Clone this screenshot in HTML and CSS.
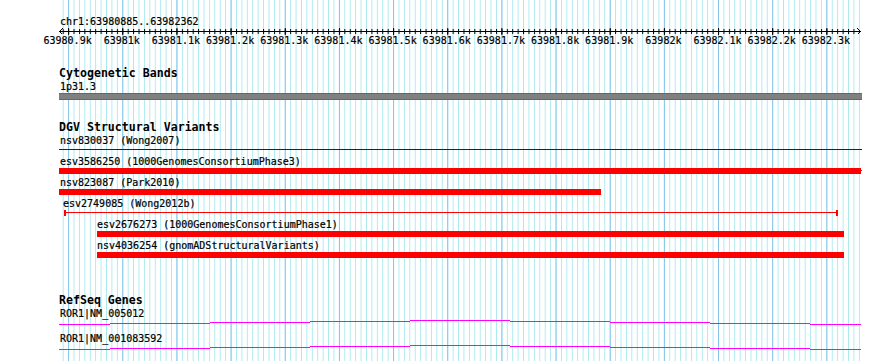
FILE: index.html
```html
<!DOCTYPE html>
<html lang="en">
<head>
    <meta charset="UTF-8">
    <title>Genome view chr1:63980885..63982362</title>
    <link rel="stylesheet" href="styles.css">
</head>
<body>

    <div class="browser">
        <div class="panel">

            <!-- Griglia di sfondo: una linea ogni 10bp, piu scura ogni 100bp -->
            <svg class="grid" width="803" height="361" shape-rendering="crispEdges">
                <defs>
                    <pattern id="minorLines" x="3.708" y="0" width="5.416" height="361" patternUnits="userSpaceOnUse">
                        <rect width="1" height="361" fill="#a9e9ef"/>
                    </pattern>
                    <pattern id="majorLines" x="9.124" y="0" width="54.16" height="361" patternUnits="userSpaceOnUse">
                        <rect width="1" height="361" fill="#86c5ea"/>
                    </pattern>
                </defs>
                <rect width="803" height="361" fill="url(#minorLines)"/>
                <rect width="803" height="361" fill="url(#majorLines)"/>
            </svg>

            <!-- Righello -->
            <div class="ruler">
                <div class="ruler-name">chr1:63980885..63982362</div>
                <svg class="scale" width="803" height="18">
                    <defs>
                        <pattern id="minorTicks" x="3.708" y="0" width="5.416" height="18" patternUnits="userSpaceOnUse">
                            <rect y="1" width="1" height="5" fill="#000"/>
                        </pattern>
                        <pattern id="majorTicks" x="9.124" y="0" width="54.16" height="18" patternUnits="userSpaceOnUse">
                            <rect y="0" width="1" height="7" fill="#000"/>
                        </pattern>
                    </defs>
                    <g shape-rendering="crispEdges">
                        <rect x="3" width="797" height="7" fill="url(#minorTicks)"/>
                        <rect x="3" width="797" height="7" fill="url(#majorTicks)"/>
                        <rect x="0" y="3" width="802" height="1" fill="#000"/>
                        <path d="M0.5 3.5L3.5 0.5M0.5 3.5L3.5 6.5M801.5 3.5L798.5 0.5M801.5 3.5L798.5 6.5" stroke="#000" fill="none"/>
                    </g>
                    <g class="scale-labels" text-anchor="middle">
                        <text x="8.6" y="15.5">63980.9k</text>
                        <text x="62.8" y="15.5">63981k</text>
                        <text x="116.9" y="15.5">63981.1k</text>
                        <text x="171.1" y="15.5">63981.2k</text>
                        <text x="225.3" y="15.5">63981.3k</text>
                        <text x="279.4" y="15.5">63981.4k</text>
                        <text x="333.6" y="15.5">63981.5k</text>
                        <text x="387.7" y="15.5">63981.6k</text>
                        <text x="441.9" y="15.5">63981.7k</text>
                        <text x="496.1" y="15.5">63981.8k</text>
                        <text x="550.2" y="15.5">63981.9k</text>
                        <text x="604.4" y="15.5">63982k</text>
                        <text x="658.5" y="15.5">63982.1k</text>
                        <text x="712.7" y="15.5">63982.2k</text>
                        <text x="766.9" y="15.5">63982.3k</text>
                    </g>
                </svg>
            </div>

            <!-- Bande citogenetiche -->
            <section class="track cyto">
                <h2 class="track-title">Cytogenetic Bands</h2>
                <div class="feature">
                    <div class="feature-label" style="margin-left:1px">1p31.3</div>
                    <div class="band" style="width:803px"></div>
                </div>
            </section>

            <!-- Varianti strutturali DGV -->
            <section class="track dgv">
                <h2 class="track-title">DGV Structural Variants</h2>
                <div class="feature">
                    <div class="feature-label" style="margin-left:1px">nsv830037 (Wong2007)</div>
                    <div class="span blue" style="width:803px"></div>
                </div>
                <div class="feature">
                    <div class="feature-label" style="margin-left:1px">esv3586250 (1000GenomesConsortiumPhase3)</div>
                    <div class="bar continues" style="width:802px"></div>
                </div>
                <div class="feature">
                    <div class="feature-label" style="margin-left:1px">nsv823087 (Park2010)</div>
                    <div class="bar" style="width:542px"></div>
                </div>
                <div class="feature">
                    <div class="feature-label" style="margin-left:4px">esv2749085 (Wong2012b)</div>
                    <div class="span capped" style="margin-left:5px;width:774px"></div>
                </div>
                <div class="feature">
                    <div class="feature-label" style="margin-left:38px">esv2676273 (1000GenomesConsortiumPhase1)</div>
                    <div class="bar" style="margin-left:38px;width:747px"></div>
                </div>
                <div class="feature">
                    <div class="feature-label" style="margin-left:38px">nsv4036254 (gnomADStructuralVariants)</div>
                    <div class="bar" style="margin-left:38px;width:747px"></div>
                </div>
            </section>

            <!-- Geni RefSeq: introne disegnato come "cappello" molto piatto -->
            <section class="track refseq">
                <h2 class="track-title">RefSeq Genes</h2>
                <div class="feature">
                    <div class="feature-label" style="margin-left:1px">ROR1|NM_005012</div>
                    <svg class="hat" width="803" height="5" shape-rendering="crispEdges">
                        <rect x="0" y="4" width="51" height="1"/>
                        <rect x="51" y="3" width="100" height="1"/>
                        <rect x="151" y="2" width="100" height="1"/>
                        <rect x="251" y="1" width="100" height="1"/>
                        <rect x="351" y="0" width="100" height="1"/>
                        <rect x="451" y="1" width="100" height="1"/>
                        <rect x="551" y="2" width="100" height="1"/>
                        <rect x="651" y="3" width="100" height="1"/>
                        <rect x="751" y="4" width="51" height="1"/>
                    </svg>
                </div>
                <div class="feature">
                    <div class="feature-label" style="margin-left:1px">ROR1|NM_001083592</div>
                    <svg class="hat" width="803" height="5" shape-rendering="crispEdges">
                        <rect x="0" y="4" width="51" height="1"/>
                        <rect x="51" y="3" width="100" height="1"/>
                        <rect x="151" y="2" width="100" height="1"/>
                        <rect x="251" y="1" width="100" height="1"/>
                        <rect x="351" y="0" width="100" height="1"/>
                        <rect x="451" y="1" width="100" height="1"/>
                        <rect x="551" y="2" width="100" height="1"/>
                        <rect x="651" y="3" width="100" height="1"/>
                        <rect x="751" y="4" width="51" height="1"/>
                    </svg>
                </div>
            </section>

        </div>
    </div>

</body>
</html>
```

FILE: styles.css
```css
/* Stili globali */
* {
    margin: 0;
    padding: 0;
    box-sizing: border-box;
}

body {
    background-color: #fff;
    color: #000;
    font-family: "DejaVu Sans Mono", monospace;
    font-size: 10px;
    overflow: hidden;
}

/* Contenitore immagine */
.browser {
    display: flex;
    height: 361px;
    padding-left: 59px;
    overflow: hidden;
}

.panel {
    position: relative;
    z-index: 0;
    width: 803px;
    height: 361px;
}

.grid {
    position: absolute;
    top: 0;
    left: 0;
    z-index: -1;
}

/* Righello */
.ruler-name {
    padding-top: 15px;
    padding-left: 1px;
    line-height: 13px;
    -webkit-text-stroke: 0.2px #000;
}

.scale {
    display: block;
    overflow: visible;
}

.scale-labels text {
    font-family: "DejaVu Sans Mono", monospace;
    font-size: 10px;
    fill: #000;
    stroke: #000;
    stroke-width: 0.2px;
}

/* Tracce */
.track {
    margin-top: 21px;
}

.track.refseq {
    margin-top: 34px;
}

.track-title {
    font-size: 11.6px;
    font-weight: bold;
    line-height: 13px;
}

.feature-label {
    line-height: 13px;
    white-space: nowrap;
    -webkit-text-stroke: 0.2px #000;
}

.dgv .feature {
    padding-bottom: 2px;
}

.refseq .feature {
    padding-bottom: 7px;
}

/* Glifi */
.band {
    height: 7px;
    background-color: #808080;
    border-top: 1px solid #666;
    border-bottom: 1px solid #666;
}

.bar {
    position: relative;
    height: 6px;
    background-color: #f00;
}

.bar.continues::after {
    content: "";
    position: absolute;
    top: 2px;
    right: -1px;
    width: 1px;
    height: 1px;
    background-color: #f00;
}

.span {
    height: 6px;
    padding-top: 2px;
    color: #f00;
}

.span::before {
    content: "";
    display: block;
    height: 1px;
    background-color: currentColor;
}

.span.blue {
    color: #1010b0;
}

.span.capped {
    border-left: 2px solid currentColor;
    border-right: 2px solid currentColor;
}

.hat {
    display: block;
}

.hat rect {
    fill: #f0f;
}
```
